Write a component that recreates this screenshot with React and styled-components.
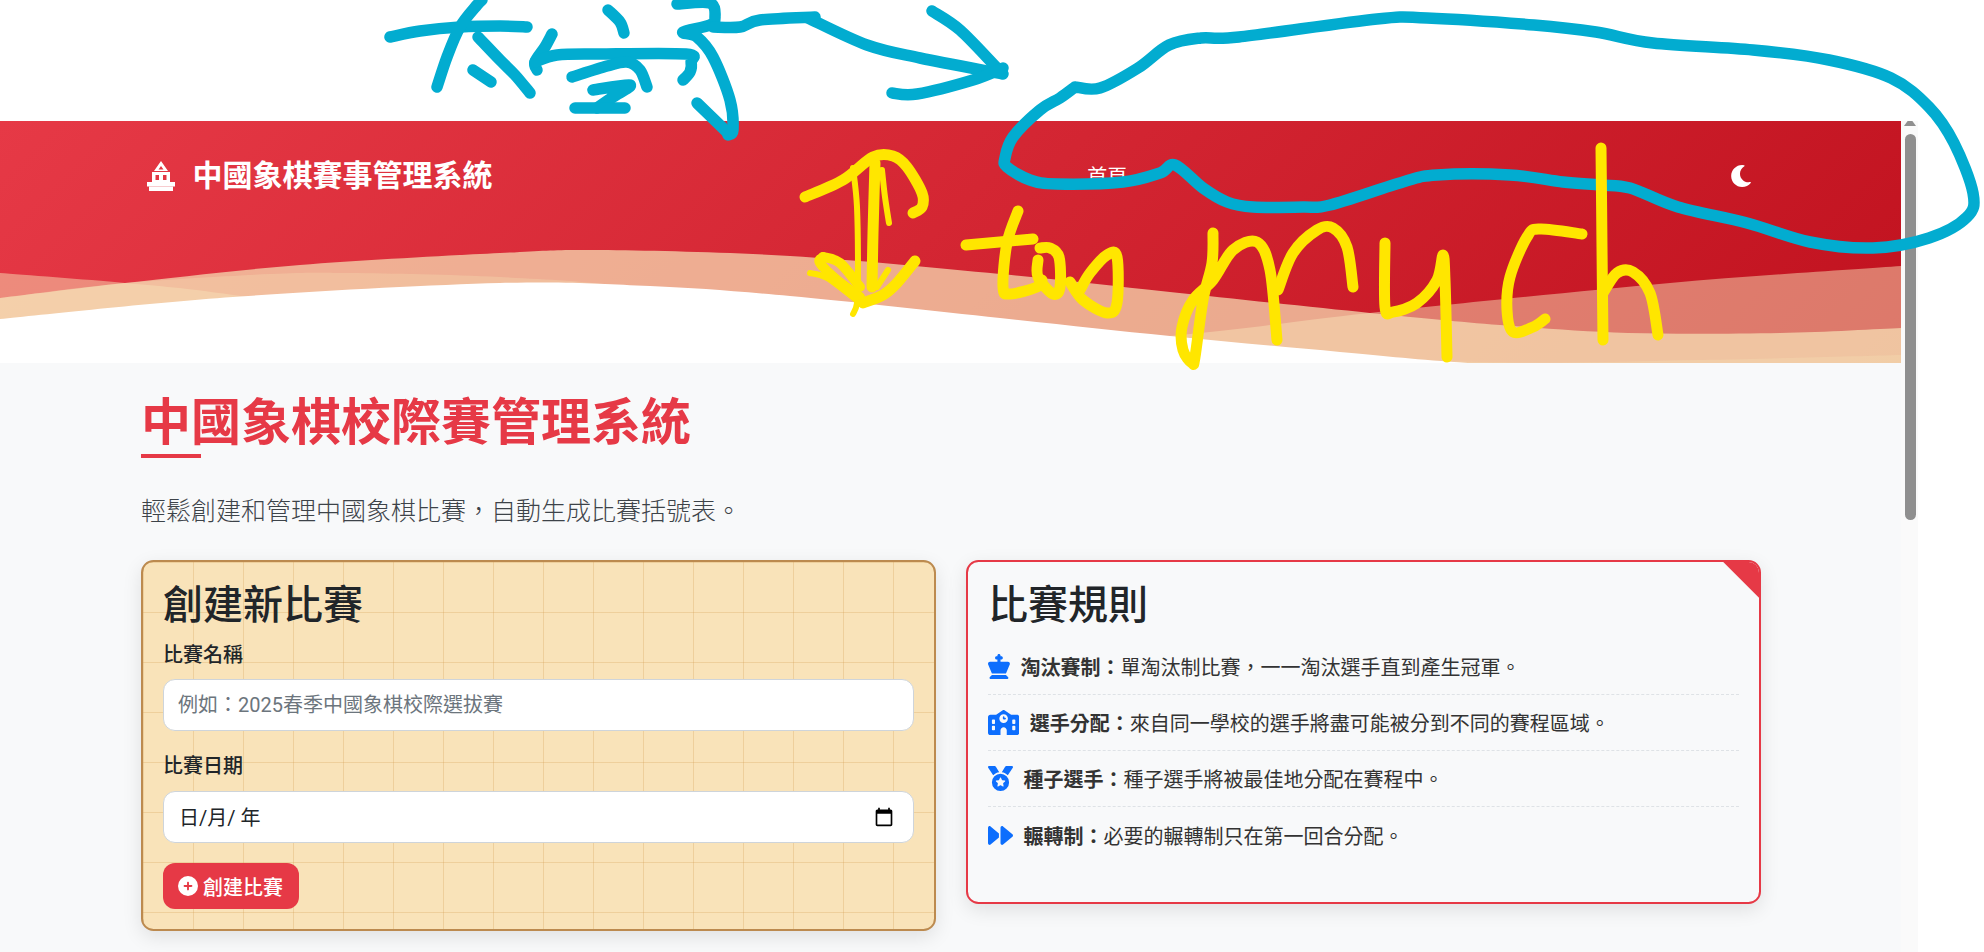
import React from 'react'
import styled, { createGlobalStyle } from 'styled-components'
import { FaChessKing, FaSchool, FaMedal, FaForward, FaCirclePlus } from 'react-icons/fa6'
import { FaMoon } from 'react-icons/fa'

// catmull-rom through the points, good enough for waves and pen strokes
const smooth = (pts) => {
  let d = `M${pts[0][0]} ${pts[0][1]}`
  for (let i = 0; i < pts.length - 1; i++) {
    const p0 = pts[i - 1] || pts[i]
    const p1 = pts[i]
    const p2 = pts[i + 1]
    const p3 = pts[i + 2] || p2
    const c1x = p1[0] + (p2[0] - p0[0]) / 6
    const c1y = p1[1] + (p2[1] - p0[1]) / 6
    const c2x = p2[0] - (p3[0] - p1[0]) / 6
    const c2y = p2[1] - (p3[1] - p1[1]) / 6
    d += `C${c1x.toFixed(1)} ${c1y.toFixed(1)} ${c2x.toFixed(1)} ${c2y.toFixed(1)} ${p2[0]} ${p2[1]}`
  }
  return d
}

const waves = [
  { o: 0.5, pts: [[0, 273], [125, 283], [233, 295], [450, 330], [700, 350], [950, 350], [1180, 335], [1370, 313], [1670, 283], [1901, 266]] },
  { o: 0.72, pts: [[0, 298], [125, 283], [300, 265], [500, 253], [600, 250], [790, 256], [1000, 274], [1170, 292], [1370, 313], [1500, 325], [1628, 333], [1780, 333], [1901, 328]] },
  { o: 0.32, pts: [[0, 298], [125, 283], [270, 274], [350, 273], [500, 277], [640, 288], [900, 325], [1200, 350], [1483, 362], [1700, 360], [1901, 355]] },
  { o: 1, white: true, pts: [[0, 319], [233, 297], [500, 283], [650, 286], [790, 296], [1000, 318], [1170, 336], [1340, 352], [1483, 364], [1700, 375], [1901, 380]] },
]

const CYAN = '#02acd0'
const YELLOW = '#ffe600'

// the pen marks drawn over the screenshot
const inkStrokes = [
  { c: CYAN, w: 11.5, pts: [[390, 37], [420, 31], [460, 27], [500, 26], [527, 27]] },
  { c: CYAN, w: 11.5, pts: [[482, 0], [477, 5], [460, 27], [447, 57], [437, 87]] },
  { c: CYAN, w: 11.5, pts: [[478, 37], [500, 60], [515, 75], [530, 93]] },
  { c: CYAN, w: 11.5, pts: [[473, 70], [491, 82]] },
  { c: CYAN, w: 11.5, pts: [[608, 10], [620, 22], [624, 33]] },
  { c: CYAN, w: 11.5, pts: [[552, 34], [545, 47], [535, 62], [537, 70]] },
  { c: CYAN, w: 11.5, pts: [[535, 62], [557, 55], [600, 54], [686, 54], [691, 62], [690, 72], [683, 80]] },
  { c: CYAN, w: 11.5, pts: [[572, 77], [607, 66], [627, 62], [640, 70], [647, 87]] },
  { c: CYAN, w: 11.5, pts: [[593, 90], [630, 85], [613, 97], [597, 108]] },
  { c: CYAN, w: 11.5, pts: [[575, 108], [625, 108]] },
  { c: CYAN, w: 11.5, pts: [[677, 4], [710, 3], [715, 17], [710, 25], [683, 32], [697, 37], [713, 57], [730, 100], [733, 130], [728, 135]] },
  { c: CYAN, w: 11.5, pts: [[697, 103], [728, 133]] },
  { c: CYAN, w: 11.5, pts: [[713, 27], [740, 27], [760, 20], [815, 17]] },
  { c: CYAN, w: 11.5, pts: [[808, 18], [867, 45], [920, 58], [1003, 74]] },
  { c: CYAN, w: 11.5, pts: [[932, 11], [960, 30], [997, 68]] },
  { c: CYAN, w: 11.5, pts: [[892, 93], [917, 94], [973, 80], [1003, 68]] },
  {
    c: CYAN,
    w: 11.5,
    pts: [
      [1075, 87], [1100, 88], [1138, 68], [1169, 45], [1201, 38], [1239, 37], [1377, 19], [1427, 18], [1534, 25], [1596, 32],
      [1653, 43], [1753, 50], [1829, 60], [1891, 78], [1929, 107], [1954, 143], [1973, 193], [1967, 217], [1929, 238],
      [1873, 248], [1810, 242], [1747, 223], [1678, 207], [1630, 188], [1600, 185], [1563, 182], [1510, 175], [1437, 175],
      [1403, 182], [1330, 205], [1303, 207], [1253, 207], [1227, 202], [1203, 188], [1175, 165], [1160, 173], [1123, 182],
      [1057, 184], [1030, 180], [1007, 167], [1005, 158], [1013, 137], [1040, 110], [1060, 98], [1075, 87],
    ],
  },
  { c: YELLOW, w: 11, pts: [[805, 197], [843, 180], [873, 157], [893, 156], [907, 167], [922, 193], [922, 207], [913, 213]] },
  { c: YELLOW, w: 11, pts: [[875, 163], [873, 233], [872, 287]] },
  { c: YELLOW, w: 6, pts: [[853, 168], [857, 207], [858, 273], [857, 303], [853, 314]] },
  { c: YELLOW, w: 6, pts: [[882, 170], [885, 197], [889, 223]] },
  { c: YELLOW, w: 10, pts: [[823, 257], [820, 263], [837, 280], [860, 297]] },
  { c: YELLOW, w: 10, pts: [[823, 257], [840, 263], [860, 287]] },
  { c: YELLOW, w: 6, pts: [[810, 273], [827, 278], [860, 303]] },
  { c: YELLOW, w: 11, pts: [[915, 261], [897, 283], [883, 295], [863, 303]] },
  { c: YELLOW, w: 6, pts: [[888, 270], [877, 287]] },
  { c: YELLOW, w: 11, pts: [[1018, 211], [1007, 243], [1003, 287], [1010, 294], [1037, 287], [1042, 280]] },
  { c: YELLOW, w: 11, pts: [[966, 245], [1033, 239]] },
  { c: YELLOW, w: 11, pts: [[1038, 260], [1038, 277], [1053, 294], [1060, 287], [1059, 257], [1050, 248], [1040, 248]] },
  { c: YELLOW, w: 11, pts: [[1070, 282], [1083, 300], [1107, 313], [1117, 303], [1117, 257], [1107, 255], [1090, 273], [1080, 290]] },
  { c: YELLOW, w: 11, pts: [[1213, 233], [1212, 263], [1203, 300], [1195, 357], [1192, 363], [1183, 350], [1182, 327], [1193, 300], [1213, 280], [1233, 250], [1257, 242], [1270, 270], [1277, 340]] },
  { c: YELLOW, w: 11, pts: [[1278, 290], [1293, 253], [1317, 230], [1333, 228], [1347, 247], [1353, 287]] },
  { c: YELLOW, w: 11, pts: [[1385, 243], [1385, 307], [1393, 312], [1417, 303], [1437, 280], [1443, 255], [1445, 280], [1447, 357]] },
  { c: YELLOW, w: 11, pts: [[1582, 234], [1540, 229], [1527, 237], [1510, 277], [1507, 310], [1513, 332], [1533, 327], [1545, 319]] },
  { c: YELLOW, w: 11, pts: [[1601, 148], [1602, 247], [1603, 340]] },
  { c: YELLOW, w: 11, pts: [[1603, 293], [1617, 273], [1633, 272], [1650, 293], [1658, 335]] },
]

const rules = [
  { Icon: FaChessKing, w: 21.9, title: '淘汰賽制：', text: '單淘汰制比賽，一一淘汰選手直到產生冠軍。' },
  { Icon: FaSchool, w: 31.25, title: '選手分配：', text: '來自同一學校的選手將盡可能被分到不同的賽程區域。' },
  { Icon: FaMedal, w: 25, title: '種子選手：', text: '種子選手將被最佳地分配在賽程中。' },
  { Icon: FaForward, w: 25, title: '輾轉制：', text: '必要的輾轉制只在第一回合分配。', last: true },
]

const GlobalStyle = createGlobalStyle`
  html, body {
    margin: 0;
    height: 952px;
    overflow: hidden;
    background: #fff;
  }
  * {
    box-sizing: border-box;
  }
`

const Canvas = styled.div`
  position: relative;
  display: flex;
  height: 952px;
  overflow: hidden;
  padding-top: 121px;
  font-family: Roboto, "Noto Sans CJK TC", sans-serif;
  color: #212529;
`

const Viewport = styled.div`
  width: 1901px;
  flex: none;
  background: #f8f9fa;
`

const Header = styled.header`
  position: relative;
  height: 242px;
  background: linear-gradient(135deg, #e63946, #c1121f);
`

const WaveSvg = styled.svg`
  position: absolute;
  left: 0;
  top: 0;
  width: 100%;
  height: 100%;
`

const NavRow = styled.nav`
  position: relative;
  display: flex;
  align-items: center;
  justify-content: space-between;
  padding: 32px 149px 0 147px;
  color: #fff;
`

const Brand = styled.div`
  display: flex;
  align-items: center;
  gap: 17.5px;
  font-size: 30px;
  font-weight: 700;
  line-height: 45px;
`

const NavLink = styled.a`
  margin: 3px 8px 0 0;
  font-size: 20px;
  line-height: 30px;
`

const Main = styled.main`
  padding: 29.5px 140px 0 141px;
`

const Title = styled.h1`
  margin: 0 0 34.5px;
  font-size: 50px;
  font-weight: 700;
  line-height: 60px;
  color: #e63946;

  &::after {
    content: '';
    display: block;
    width: 60px;
    height: 4px;
    margin-top: 1.5px;
    background: #e63946;
  }
`

const Lead = styled.p`
  margin: 0 0 29.75px;
  font-size: 25px;
  font-weight: 300;
  line-height: 37.5px;
  color: #3d4349;
`

const Columns = styled.div`
  display: grid;
  grid-template-columns: 795px 795px;
  gap: 30px;
  align-items: start;
`

const Card = styled.section`
  position: relative;
  overflow: hidden;
  padding: 20px;
  border-radius: 12.5px;
  box-shadow: 0 6px 19px rgba(0, 0, 0, 0.1);
`

const FormCard = styled(Card)`
  border: 2.5px solid #bc8a4f;
  background-color: #f9e3b9;
  background-image:
    linear-gradient(rgba(212, 163, 89, 0.3) 1px, transparent 1px),
    linear-gradient(90deg, rgba(212, 163, 89, 0.3) 1px, transparent 1px);
  background-size: 50px 50px;
`

const RulesCard = styled(Card)`
  border: 2.5px solid #e63946;
  background: #f8f9fa;

  &::before {
    content: '';
    position: absolute;
    top: 0;
    right: 0;
    width: 36px;
    height: 36px;
    background: #e63946;
    clip-path: polygon(0 0, 100% 0, 100% 100%);
  }
`

const CardTitle = styled.h2`
  margin: 0 0 9.5px;
  font-size: 40px;
  font-weight: 500;
  line-height: 48px;
`

const Field = styled.div`
  margin-bottom: 20px;
  padding-top: 0.5px;
`

const Label = styled.label`
  display: block;
  margin-bottom: 9.5px;
  font-size: 20px;
  font-weight: 500;
  line-height: 30px;
`

const TextInput = styled.input`
  display: block;
  width: 100%;
  height: 52px;
  padding: 0 14px;
  border: 1.25px solid #ced4da;
  border-radius: 12px;
  background: #fff;
  font: inherit;
  font-size: 20px;
  color: #212529;

  &::placeholder {
    color: #6c757d;
  }
`

const DateBox = styled.div`
  display: flex;
  align-items: center;
  justify-content: space-between;
  height: 52px;
  padding: 0 19px 0 15px;
  border: 1.25px solid #ced4da;
  border-radius: 12px;
  background: #fff;
  font-size: 20px;
`

const SubmitButton = styled.button`
  display: flex;
  align-items: center;
  gap: 5px;
  height: 46px;
  margin-top: 20.5px;
  padding: 0 16px 0 15px;
  border: 0;
  border-radius: 12px;
  background: #e63946;
  color: #fff;
  font: inherit;
  font-size: 20px;
  font-weight: 500;
`

const RuleList = styled.ul`
  margin: 0 0 19px;
  padding: 0;
  list-style: none;
`

const RuleRow = styled.li`
  display: flex;
  align-items: center;
  gap: 10.5px;
  height: 56px;
  font-size: 20px;
  color: #333;
  border-bottom: ${(props) => (props.$last ? 'none' : '1.25px dashed #dee2e6')};

  svg {
    flex: none;
    width: ${(props) => props.$iconW}px;
    height: 25px;
    color: #0d6efd;
  }

  strong {
    font-weight: 700;
  }
`

const ScrollTrack = styled.div`
  position: relative;
  width: 17px;
  flex: none;
  background: #fafafa;

  &::before {
    content: '';
    position: absolute;
    top: 0;
    left: 3px;
    width: 12px;
    height: 5px;
    background: #8f8f8f;
    clip-path: polygon(30% 0, 70% 0, 100% 100%, 0 100%);
  }
`

const ScrollThumb = styled.div`
  width: 11px;
  height: 386px;
  margin: 13px 0 0 4px;
  border-radius: 6px;
  background: #8f8f8f;
`

const InkLayer = styled.svg`
  position: absolute;
  left: 0;
  top: 0;
  width: 1984px;
  height: 952px;
  pointer-events: none;
`

const InkStroke = styled.path`
  fill: none;
  stroke: ${(props) => props.$color};
  stroke-width: ${(props) => props.$w}px;
  stroke-linecap: round;
  stroke-linejoin: round;
`

const Tower = () => (
  <svg width="28" height="30" viewBox="0 0 28 30" fill="#fff" fillRule="evenodd">
    <path d="M14 0L21 10H7ZM14 5L11.5 8.5H16.5Z" />
    <path d="M5 11H23V21H5ZM8.5 14V19H12V14ZM16 14V19H19.5V14Z" />
    <path d="M0 21H28V25.5H0Z" />
    <path d="M2 25.5H26V30H2Z" />
  </svg>
)

const App = () => {
  return (
    <Canvas>
      <GlobalStyle />
      <Viewport>
        <Header>
          <WaveSvg viewBox="0 121 1901 242" preserveAspectRatio="none">
            {waves.map((w, i) => (
              <path
                key={i}
                d={`${smooth(w.pts)}L1901 400L0 400Z`}
                fill={w.white ? '#fff' : '#f7e0b5'}
                fillOpacity={w.o}
              />
            ))}
          </WaveSvg>
          <NavRow>
            <Brand>
              <Tower />
              中國象棋賽事管理系統
            </Brand>
            <NavLink>首頁</NavLink>
            <FaMoon size={22} />
          </NavRow>
        </Header>
        <Main>
          <Title>中國象棋校際賽管理系統</Title>
          <Lead>輕鬆創建和管理中國象棋比賽，自動生成比賽括號表。</Lead>
          <Columns>
            <FormCard>
              <CardTitle>創建新比賽</CardTitle>
              <Field>
                <Label>比賽名稱</Label>
                <TextInput placeholder="例如：2025春季中國象棋校際選拔賽" />
              </Field>
              <Label>比賽日期</Label>
              <DateBox>
                <span>日/月/ 年</span>
                <svg width="20" height="20" viewBox="0 0 24 24" fill="#000">
                  <path d="M20 3h-1V1h-2v2H7V1H5v2H4c-1.1 0-2 .9-2 2v16c0 1.1.9 2 2 2h16c1.1 0 2-.9 2-2V5c0-1.1-.9-2-2-2zm0 18H4V8h16v13z" />
                </svg>
              </DateBox>
              <SubmitButton>
                <FaCirclePlus size={20} />
                創建比賽
              </SubmitButton>
            </FormCard>
            <RulesCard>
              <CardTitle>比賽規則</CardTitle>
              <RuleList>
                {rules.map((r) => (
                  <RuleRow key={r.title} $last={r.last} $iconW={r.w}>
                    <r.Icon />
                    <span>
                      <strong>{r.title}</strong>
                      {r.text}
                    </span>
                  </RuleRow>
                ))}
              </RuleList>
            </RulesCard>
          </Columns>
        </Main>
      </Viewport>
      <ScrollTrack>
        <ScrollThumb />
      </ScrollTrack>
      <InkLayer viewBox="0 0 1984 952" aria-hidden="true">
        {inkStrokes.map((s, i) => (
          <InkStroke key={i} d={smooth(s.pts)} $color={s.c} $w={s.w} />
        ))}
      </InkLayer>
    </Canvas>
  )
}

export default App
